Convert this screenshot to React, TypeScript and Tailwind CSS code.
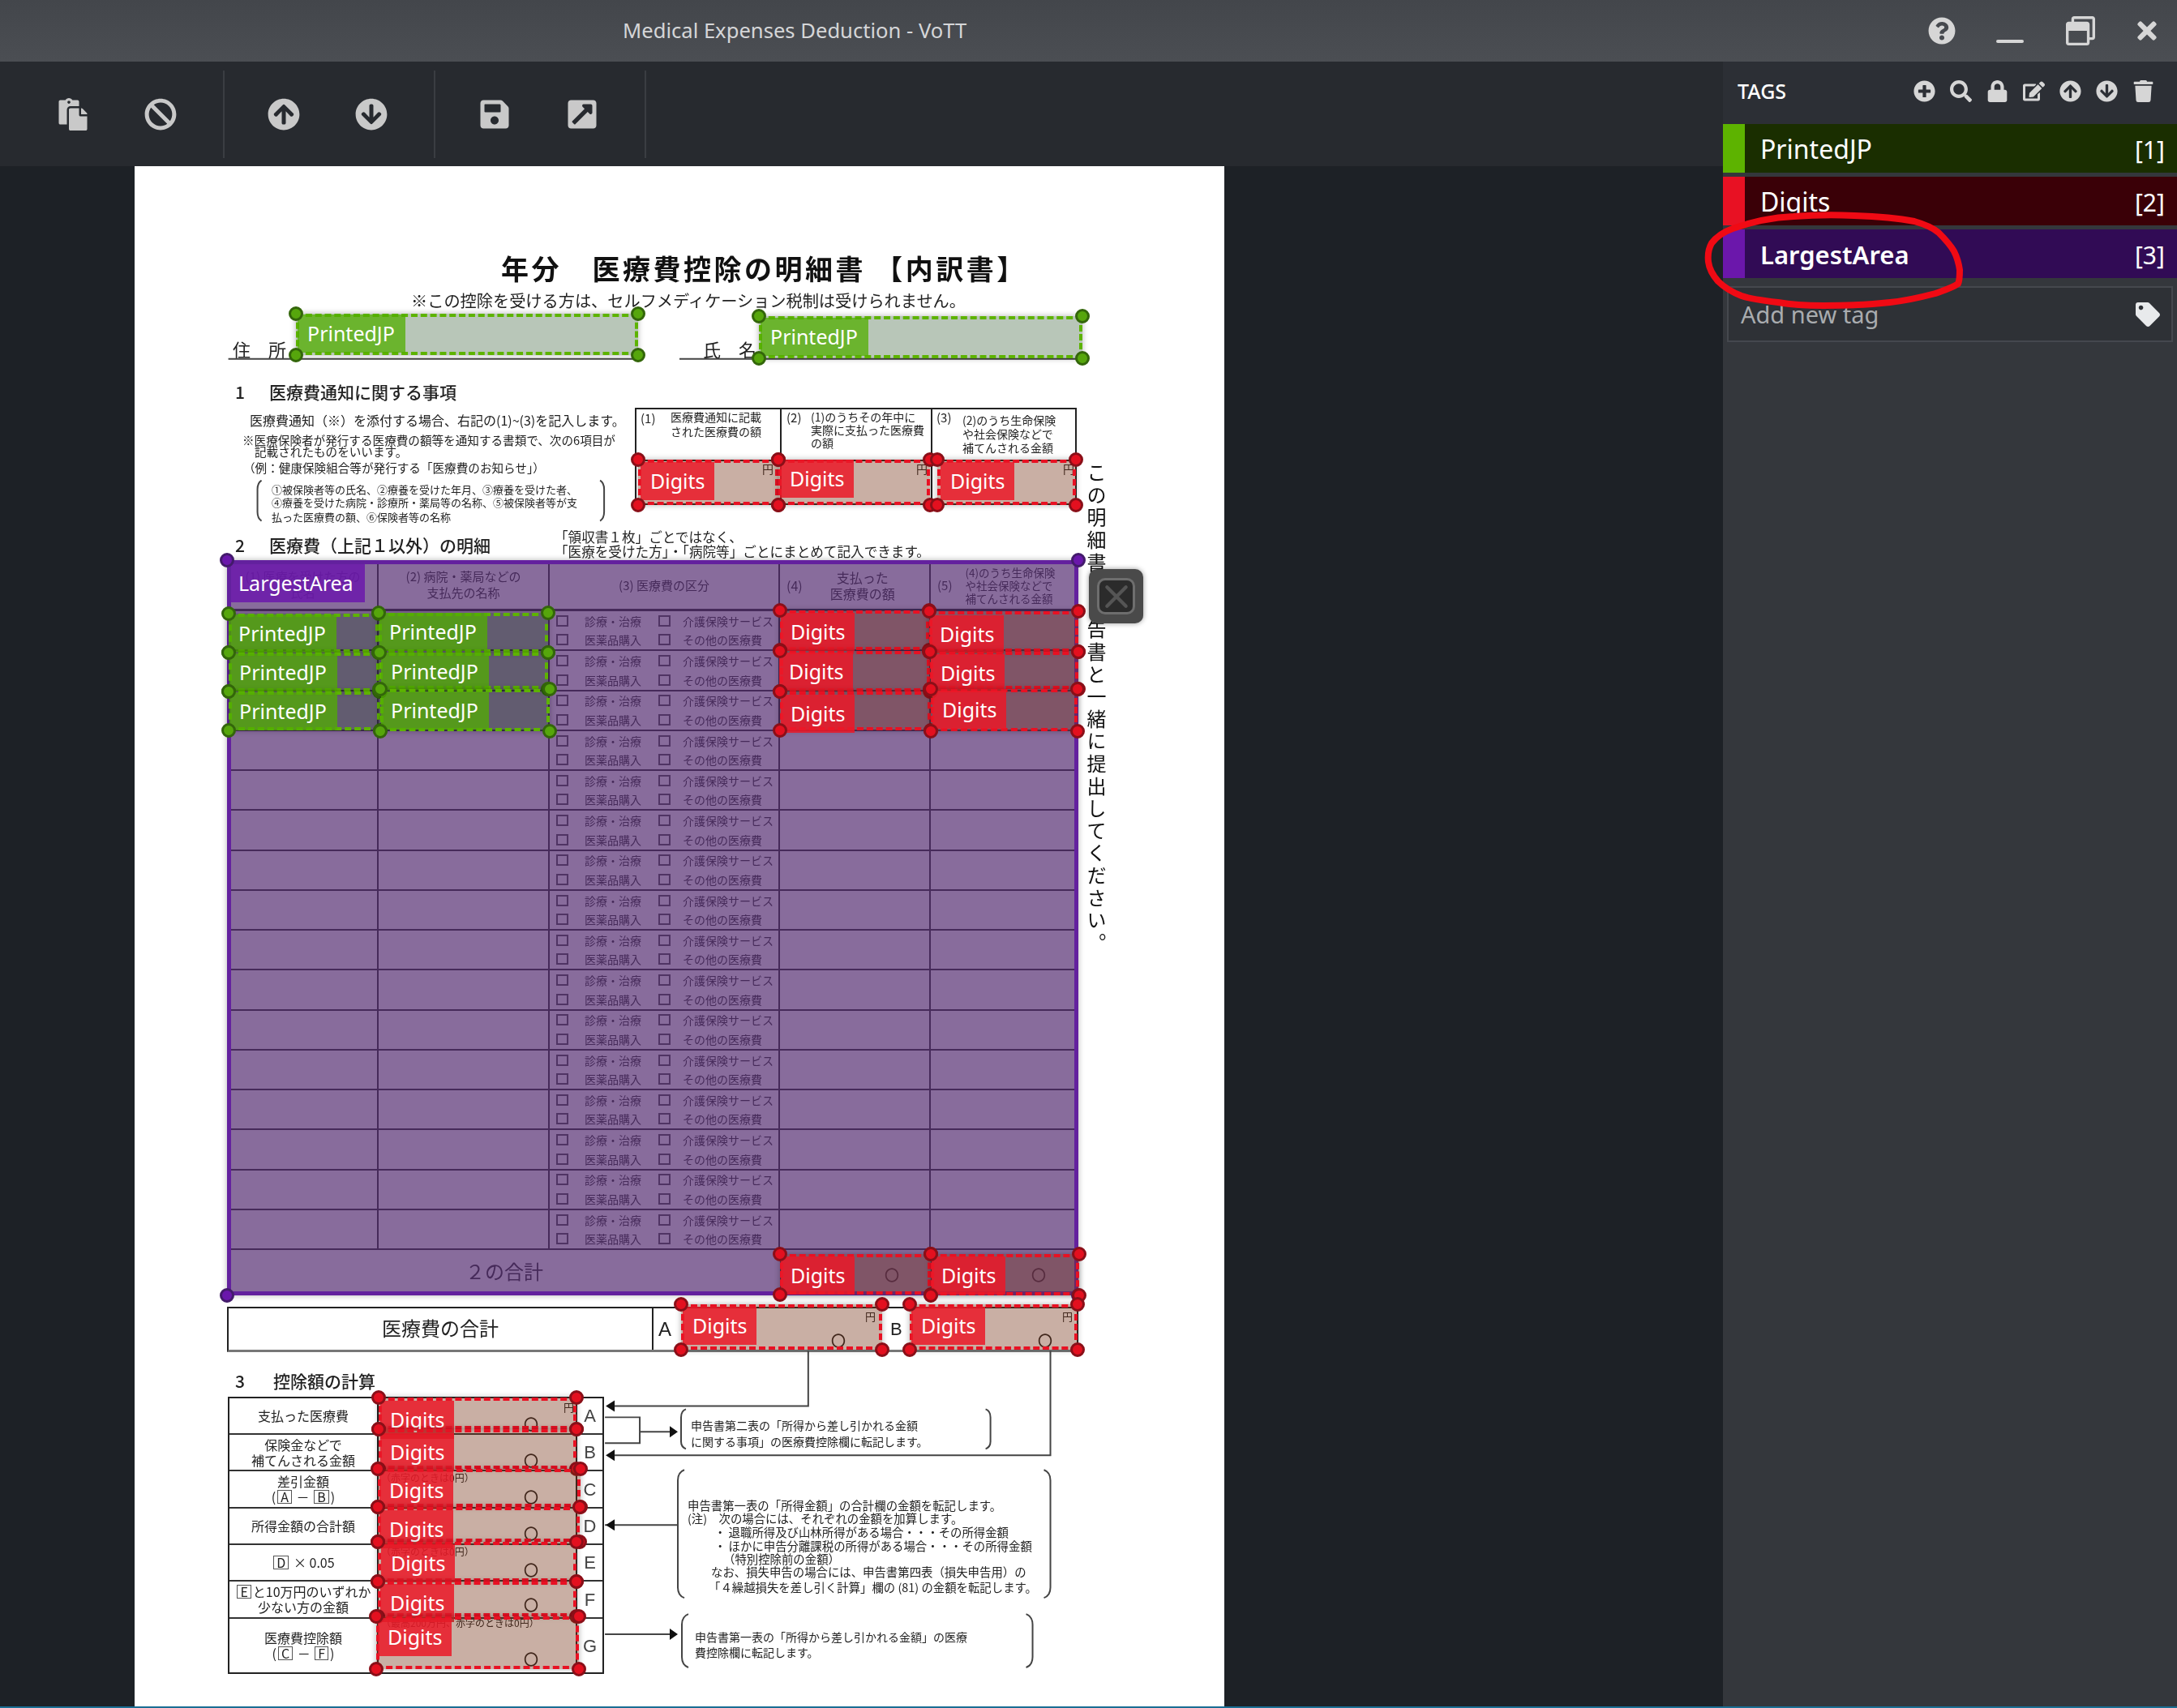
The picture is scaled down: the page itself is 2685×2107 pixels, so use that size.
import type { ReactNode } from "react";
import {
  FaArrowCircleDown,
  FaArrowCircleUp,
  FaBan,
  FaCut,
  FaEdit,
  FaExternalLinkSquareAlt,
  FaLock,
  FaPaste,
  FaPlusCircle,
  FaQuestionCircle,
  FaRegWindowRestore,
  FaSave,
  FaSearch,
  FaTag,
  FaTimes,
  FaTrash,
} from "react-icons/fa";

const ui = "font-['Noto_Sans',sans-serif]";
const jp = "font-['Noto_Sans_CJK_JP',sans-serif]";

// doc origin inside the screenshot
const OX = 166;
const OY = 205;

type Kind = "green" | "red";
type Region = { kind: Kind; x0: number; y0: number; x1: number; y1: number; lx?: number; ly?: number };

const regions: Region[] = [
  { kind: "green", x0: 365, y0: 387, x1: 787, y1: 438, lx: 367, ly: 388 },
  { kind: "green", x0: 936, y0: 390, x1: 1335, y1: 442, lx: 938, ly: 392 },
  { kind: "red", x0: 787, y0: 567, x1: 960, y1: 623, lx: 790, ly: 570 },
  { kind: "red", x0: 960, y0: 567, x1: 1147, y1: 623, lx: 962, ly: 567 },
  { kind: "red", x0: 1156, y0: 567, x1: 1327, y1: 623, lx: 1160, ly: 570 },
  { kind: "green", x0: 282, y0: 757, x1: 467, y1: 805, lx: 282, ly: 758 },
  { kind: "green", x0: 282, y0: 805, x1: 468, y1: 853, lx: 283, ly: 806 },
  { kind: "green", x0: 282, y0: 853, x1: 469, y1: 901, lx: 283, ly: 854 },
  { kind: "green", x0: 467, y0: 756, x1: 676, y1: 805, lx: 468, ly: 756 },
  { kind: "green", x0: 468, y0: 805, x1: 676, y1: 850, lx: 470, ly: 805 },
  { kind: "green", x0: 469, y0: 850, x1: 678, y1: 902, lx: 470, ly: 853 },
  { kind: "red", x0: 962, y0: 753, x1: 1146, y1: 802, lx: 963, ly: 756 },
  { kind: "red", x0: 962, y0: 803, x1: 1147, y1: 853, lx: 961, ly: 805 },
  { kind: "red", x0: 962, y0: 853, x1: 1148, y1: 901, lx: 963, ly: 857 },
  { kind: "red", x0: 1146, y0: 754, x1: 1330, y1: 804, lx: 1147, ly: 759 },
  { kind: "red", x0: 1147, y0: 804, x1: 1330, y1: 850, lx: 1148, ly: 807 },
  { kind: "red", x0: 1148, y0: 850, x1: 1329, y1: 902, lx: 1150, ly: 852 },
  { kind: "red", x0: 962, y0: 1547, x1: 1148, y1: 1597, lx: 963, ly: 1550 },
  { kind: "red", x0: 1148, y0: 1547, x1: 1331, y1: 1598, lx: 1149, ly: 1550 },
  { kind: "red", x0: 840, y0: 1609, x1: 1088, y1: 1665, lx: 842, ly: 1612 },
  { kind: "red", x0: 1122, y0: 1609, x1: 1329, y1: 1665, lx: 1124, ly: 1612 },
  { kind: "red", x0: 467, y0: 1724, x1: 711, y1: 1763, lx: 469, ly: 1728 },
  { kind: "red", x0: 467, y0: 1763, x1: 711, y1: 1812, lx: 469, ly: 1768 },
  { kind: "red", x0: 466, y0: 1812, x1: 716, y1: 1859, lx: 468, ly: 1815 },
  { kind: "red", x0: 466, y0: 1859, x1: 715, y1: 1902, lx: 468, ly: 1863 },
  { kind: "red", x0: 466, y0: 1902, x1: 711, y1: 1951, lx: 470, ly: 1905 },
  { kind: "red", x0: 466, y0: 1951, x1: 711, y1: 1994, lx: 469, ly: 1954 },
  { kind: "red", x0: 464, y0: 1994, x1: 714, y1: 2059, lx: 466, ly: 1996 },
];

// loose text of the scanned form: [x, centre y, size, text]
const lines: [number, number, number, string][] = [
  [507, 371, 20.2, "※この控除を受ける方は、セルフメディケーション税制は受けられません。"],
  [287, 430, 22, "住　所"],
  [867, 430, 22, "氏　名"],
  [290, 483, 21, "1"],
  [332, 483, 21, "医療費通知に関する事項"],
  [308, 518, 16, "医療費通知（※）を添付する場合、右記の(1)~(3)を記入します。"],
  [299, 543, 14.6, "※医療保険者が発行する医療費の額等を通知する書類で、次の6項目が"],
  [314, 557, 14.6, "記載されたものをいいます。"],
  [300, 577, 14.6, "（例：健康保険組合等が発行する「医療費のお知らせ」）"],
  [335, 603, 13, "①被保険者等の氏名、②療養を受けた年月、③療養を受けた者、"],
  [335, 619, 13, "④療養を受けた病院・診療所・薬局等の名称、⑤被保険者等が支"],
  [335, 637, 13, "払った医療費の額、⑥保険者等の名称"],
  [290, 672, 21, "2"],
  [332, 672, 21, "医療費（上記１以外）の明細"],
  [684, 662, 16.6, "「領収書１枚」ごとではなく、"],
  [684, 680, 16.6, "「医療を受けた方」・「病院等」ごとにまとめて記入できます。"],
  [790, 515, 15, "(1)"],
  [827, 514, 14, "医療費通知に記載"],
  [827, 532, 14, "された医療費の額"],
  [970, 514, 15, "(2)"],
  [1000, 514, 14, "(1)のうちその年中に"],
  [1000, 530, 14, "実際に支払った医療費"],
  [1000, 546, 14, "の額"],
  [1155, 514, 15, "(3)"],
  [1187, 518, 14, "(2)のうち生命保険"],
  [1187, 535, 14, "や社会保険などで"],
  [1187, 552, 14, "補てんされる金額"],
  [940, 578, 14, "円"],
  [1130, 578, 14, "円"],
  [1311, 578, 14, "円"],
  [290, 1703, 21, "3"],
  [337, 1703, 21, "控除額の計算"],
  [1067, 1623, 13, "円"],
  [1310, 1623, 13, "円"],
  [852, 1758, 14, "申告書第二表の「所得から差し引かれる金額"],
  [852, 1778, 14, "に関する事項」の医療費控除欄に転記します。"],
  [848, 1857, 14.4, "申告書第一表の「所得金額」の合計欄の金額を転記します。"],
  [848, 1873, 14.4, "(注)　次の場合には、それぞれの金額を加算します。"],
  [881, 1890, 14.4, "・ 退職所得及び山林所得がある場合・・・その所得金額"],
  [881, 1907, 14.4, "・ ほかに申告分離課税の所得がある場合・・・その所得金額"],
  [892, 1923, 14.4, "（特別控除前の金額）"],
  [877, 1939, 14.4, "なお、損失申告の場合には、申告書第四表（損失申告用）の"],
  [874, 1958, 14.4, "「４繰越損失を差し引く計算」欄の (81) の金額を転記します。"],
  [857, 2019, 14, "申告書第一表の「所得から差し引かれる金額」の医療"],
  [857, 2038, 14, "費控除欄に転記します。"],
  [695, 1735, 13, "円"],
  [470, 1823, 12, "（赤字のときは0円）"],
  [470, 1914, 12, "（赤字のときは0円）"],
  [470, 2002, 12, "（最高200万円、赤字のときは0円）"],
  [646, 1756, 18, "〇"],
  [646, 1801, 18, "〇"],
  [646, 1846, 18, "〇"],
  [646, 1891, 18, "〇"],
  [646, 1936, 18, "〇"],
  [646, 1979, 18, "〇"],
  [646, 2046, 18, "〇"],
  [1025, 1653, 18, "〇"],
  [1280, 1653, 18, "〇"],
  [1091, 1572, 18, "〇"],
  [1272, 1572, 18, "〇"],
];

function Boxed({ children }: { children: ReactNode }) {
  return <span className="mx-[2px] inline-block border border-[#555] px-[3px] leading-[15px]">{children}</span>;
}

const calcRows: { h: number; letter: string; rows: ReactNode[] }[] = [
  { h: 45, letter: "A", rows: ["支払った医療費"] },
  { h: 45, letter: "B", rows: ["保険金などで", "補てんされる金額"] },
  {
    h: 46,
    letter: "C",
    rows: [
      "差引金額",
      <>
        (<Boxed>A</Boxed> － <Boxed>B</Boxed>)
      </>,
    ],
  },
  { h: 45, letter: "D", rows: ["所得金額の合計額"] },
  {
    h: 45,
    letter: "E",
    rows: [
      <>
        <Boxed>D</Boxed> × 0.05
      </>,
    ],
  },
  {
    h: 46,
    letter: "F",
    rows: [
      <>
        <Boxed>E</Boxed>と10万円のいずれか
      </>,
      "少ない方の金額",
    ],
  },
  {
    h: 66,
    letter: "G",
    rows: [
      "医療費控除額",
      <>
        (<Boxed>C</Boxed> － <Boxed>F</Boxed>)
      </>,
    ],
  },
];

function Region({ r }: { r: Region }) {
  const green = r.kind === "green";
  return (
    <>
      <div
        className={`absolute border-4 border-dashed shadow-[0_0_7px_rgba(0,0,0,0.3)] ${
          green ? "border-[#5db300] bg-[rgba(0,50,0,0.28)]" : "border-[#e81123] bg-[rgba(115,50,20,0.39)]"
        }`}
        style={{ left: r.x0 - OX, top: r.y0 - OY, width: r.x1 - r.x0, height: r.y1 - r.y0 }}
      />
      <div
        className={`absolute flex h-[47px] items-center pl-3 text-[25px] text-white ${ui} ${
          green ? "w-[133px] bg-[rgba(82,174,0,0.75)]" : "w-[91px] bg-[rgba(235,25,40,0.85)]"
        }`}
        style={{ left: (r.lx ?? r.x0) - OX, top: (r.ly ?? r.y0) - OY }}
      >
        {green ? "PrintedJP" : "Digits"}
      </div>
      {[
        [r.x0, r.y0],
        [r.x1, r.y0],
        [r.x0, r.y1],
        [r.x1, r.y1],
      ].map(([x, y]) => (
        <div
          key={`${x}-${y}`}
          className={`absolute h-[18px] w-[18px] rounded-full border-[3px] ${
            green ? "border-[#33660a] bg-[#56a60c]" : "border-[#8a0f18] bg-[#e3101f]"
          }`}
          style={{ left: x - OX - 9, top: y - OY - 9 }}
        />
      ))}
    </>
  );
}

function Form() {
  return (
    <div className={`absolute inset-0 text-[#222] blur-[0.5px] ${jp}`}>
      <div className="absolute left-[452px] top-[109px] whitespace-pre text-[34px] font-bold leading-[34px] tracking-[3.5px] text-[#111]">
        年分　医療費控除の明細書 【内訳書】
      </div>

      {lines.map(([x, y, size, text]) => (
        <div
          key={`${x}-${y}`}
          className="absolute whitespace-pre leading-none"
          style={{ left: x - OX, top: y - OY - size / 2, fontSize: size, fontWeight: size === 21 || size === 18 ? 500 : 400 }}
        >
          {text}
        </div>
      ))}

      <div className="absolute left-[617px] top-[298px] h-[120px] w-[545px] border-2 border-[#222]">
        <div className="absolute left-[177px] top-0 h-full w-0.5 bg-[#222]" />
        <div className="absolute left-[363px] top-0 h-full w-0.5 bg-[#222]" />
        <div className="absolute left-0 top-[62px] h-0.5 w-full bg-[#222]" />
      </div>

      {/* section 2 table */}
      <div className="absolute left-[114px] top-[486px] w-[1050px] border-2 border-[#222]">
        <div className="grid h-[61px] grid-cols-[185px_211px_284px_186px_180px] border-b-[3px] border-[#222] text-[15px] leading-[20px]">
          <div className="border-r-2 border-[#222] pt-2 text-center">
            (1) 医療を受けた方の
            <br />
            氏名
          </div>
          <div className="border-r-2 border-[#222] pt-2 text-center">
            (2) 病院・薬局などの
            <br />
            支払先の名称
          </div>
          <div className="flex items-center justify-center border-r-2 border-[#222]">(3) 医療費の区分</div>
          <div className="flex items-center gap-[34px] border-r-2 border-[#222] pl-2 text-[16px]">
            <span>(4)</span>
            <span className="text-center">
              支払った
              <br />
              医療費の額
            </span>
          </div>
          <div className="flex items-center gap-4 pl-2 text-[13.5px] leading-[16px]">
            <span className="text-[15px]">(5)</span>
            <span>
              (4)のうち生命保険
              <br />
              や社会保険などで
              <br />
              補てんされる金額
            </span>
          </div>
        </div>
        {Array.from({ length: 16 }, (_, i) => (
          <div
            key={i}
            className="grid h-[49.25px] grid-cols-[185px_211px_284px_186px_180px] border-b-2 border-[#222] last:border-b-4"
          >
            <div className="border-r-2 border-[#222]" />
            <div className="border-r-2 border-[#222]" />
            <div className="flex flex-col justify-around border-r-2 border-[#222] pl-2 text-[14px] leading-none">
              <div className="flex items-center">
                <span className="h-[14px] w-[15px] border-2 border-[#444]" />
                <span className="ml-5 w-[70px] whitespace-nowrap">診療・治療</span>
                <span className="ml-[21px] h-[14px] w-[15px] border-2 border-[#444]" />
                <span className="ml-[15px] whitespace-nowrap">介護保険サービス</span>
              </div>
              <div className="flex items-center">
                <span className="h-[14px] w-[15px] border-2 border-[#444]" />
                <span className="ml-5 w-[70px] whitespace-nowrap">医薬品購入</span>
                <span className="ml-[21px] h-[14px] w-[15px] border-2 border-[#444]" />
                <span className="ml-[15px] whitespace-nowrap">その他の医療費</span>
              </div>
            </div>
            <div className="border-r-2 border-[#222]" />
            <div />
          </div>
        ))}
        <div className="grid h-[52px] grid-cols-[682px_186px_180px]">
          <div className="flex items-center justify-center border-r-2 border-[#222] text-[24px]">２の合計</div>
          <div className="border-r-2 border-[#222]" />
          <div />
        </div>
      </div>

      {/* 医療費の合計 row */}
      <div className="absolute left-[114px] top-[1407px] flex h-[56px] w-[1050px] items-center border-2 border-b-[3px] border-[#222] border-b-[#777] text-[24px]">
        <div className="w-[522px] pb-1 text-center">医療費の合計</div>
        <div className="h-full w-0.5 bg-[#222]" />
        <div className="ml-1.5 font-['Liberation_Sans',sans-serif] text-[24px]">A</div>
        <div className="ml-[270px] font-['Liberation_Sans',sans-serif] text-[22px]">B</div>
      </div>

      {/* section 3 table */}
      <div className="absolute left-[115px] top-[1518px] w-[464px] border-2 border-[#222]">
        {calcRows.map((row) => (
          <div
            key={row.letter}
            className="grid grid-cols-[184px_245px_31px] border-b-2 border-[#333] text-center last:border-b-0"
            style={{ height: row.h }}
          >
            <div className="flex flex-col justify-center border-r-2 border-[#222] text-[16px] leading-[19px]">
              {row.rows.map((t, i) => (
                <div key={i} className="whitespace-nowrap">
                  {t}
                </div>
              ))}
            </div>
            <div className="border-r-2 border-[#222]" />
            <div className="flex items-center justify-center font-['Liberation_Sans',sans-serif] text-[22px] text-[#444]">
              {row.letter}
            </div>
          </div>
        ))}
      </div>

      {/* vertical note down the right edge */}
      <div className="absolute left-[1171px] top-[366px] h-[610px] whitespace-nowrap text-[24px] leading-[30px] tracking-[3.6px] text-[#111] [writing-mode:vertical-rl]">
        この明細書は申告書と一緒に提出してください。
      </div>

      {/* leader lines and brackets of section 3 */}
      <svg className="absolute inset-0 h-full w-full" viewBox={`${OX} ${OY} 1344 1902`} fill="none" stroke="#444" strokeWidth="2">
        <path d="M281 443H784M838 443H1335M997 1668V1736H758M1296 1668V1797H758" />
        <path d="M746 1750H789V1782H746M789 1768H826M746 1883H836M746 2018H826" />
        <path d="M758 1729V1743L747 1736ZM758 1790V1804L747 1797ZM758 1876V1890L747 1883ZM826 1761V1775L836 1768ZM826 2011V2025L836 2018Z" fill="#111" stroke="none" />
        <path d="M846 1740Q840 1742 840 1750V1780Q840 1787 846 1789M1216 1740Q1222 1742 1222 1750V1780Q1222 1787 1216 1789" />
        <path d="M844 1815Q836 1818 836 1828V1960Q836 1970 844 1973M1288 1815Q1296 1818 1296 1828V1960Q1296 1970 1288 1973" />
        <path d="M849 1993Q841 1996 841 2006V2046Q841 2056 849 2059M1266 1993Q1274 1996 1274 2006V2046Q1274 2056 1266 2059" />
        <path d="M322 593Q317 596 317 604V632Q317 640 322 643M740 593Q745 596 745 604V632Q745 640 740 643" />
      </svg>
    </div>
  );
}

function Document() {
  return (
    <div className="relative h-full w-[1344px] bg-white">
      <Form />

      {/* LargestArea region */}
      <div className="absolute left-[114px] top-[486px] h-[907px] w-[1050px] border-[5px] border-[#63219e] bg-[rgba(86,46,114,0.7)] shadow-[0_0_7px_rgba(0,0,0,0.3)]" />
      <div className={`absolute left-[119px] top-[491px] flex h-[47px] w-[165px] items-center pl-[9px] text-[25px] text-white ${ui} bg-[rgba(107,23,171,0.85)]`}>
        LargestArea
      </div>
      {[
        [280, 691],
        [1330, 691],
        [280, 1598],
        [1330, 1598],
      ].map(([x, y]) => (
        <div
          key={`${x}-${y}`}
          className="absolute h-[18px] w-[18px] rounded-full border-[3px] border-[#431a6b] bg-[#6a17ab]"
          style={{ left: x - OX - 9, top: y - OY - 9 }}
        />
      ))}

      {regions.map((r) => (
        <Region key={`${r.x0}-${r.y0}`} r={r} />
      ))}

      {/* delete-region button */}
      <div className="absolute left-[1177px] top-[497px] flex h-[67px] w-[67px] items-center justify-center rounded-[10px] bg-[#4a4a4a] shadow-[0_0_6px_rgba(0,0,0,0.4)]">
        <div className="flex h-[45px] w-[47px] items-center justify-center rounded-[10px] border-[3px] border-[#6e6e6e] bg-[#2b2b2b]">
          <svg viewBox="0 0 32 32" className="h-[34px] w-[34px]" stroke="#555" strokeWidth="4" strokeLinecap="round">
            <path d="M5 5L27 27M27 5L5 27" />
          </svg>
        </div>
      </div>
    </div>
  );
}

const toolGroups = [
  [FaPaste, FaBan],
  [FaArrowCircleUp, FaArrowCircleDown],
  [FaSave, FaExternalLinkSquareAlt],
];

function Toolbar() {
  return (
    <div className="flex h-[129px] items-center bg-[#272a2f] text-[#c9c9c9]">
      <FaCut className="-ml-[38px] mr-[15px] h-[40px] w-[40px] shrink-0" />
      {toolGroups.map((group, i) => (
        <div key={i} className="flex h-[108px] items-center gap-[68px] border-r-2 border-[#3a3d42] pl-[53px] pr-[57px]">
          {group.map((Icon, j) => (
            <Icon key={j} className="h-[40px] w-[40px]" />
          ))}
        </div>
      ))}
    </div>
  );
}

const tags = [
  { name: "PrintedJP", key: "[1]", bar: "bg-[#5db300]", bg: "bg-[#1a2e00]", text: "text-[32px]" },
  { name: "Digits", key: "[2]", bar: "bg-[#e81123]", bg: "bg-[#3a0007]", text: "text-[32px]" },
  { name: "LargestArea", key: "[3]", bar: "bg-[#6b17ab]", bg: "bg-[#310b55]", text: "text-[31px] font-semibold" },
];

function TagsPanel() {
  return (
    <div className={`relative flex w-[560px] flex-col bg-[#34373c] ${ui}`}>
      <div className="flex h-[77px] items-center justify-between bg-[#2c2f35] pb-1 pl-[18px] pr-[28px] text-[#d6d6d6]">
        <span className="text-[25px] font-medium text-white">TAGS</span>
        <div className="flex items-center gap-[18px]">
          <FaPlusCircle className="h-[27px] w-[27px]" />
          <FaSearch className="h-[27px] w-[27px]" />
          <FaLock className="h-[27px] w-[27px]" />
          <FaEdit className="h-[27px] w-[27px]" />
          <FaArrowCircleUp className="h-[27px] w-[27px]" />
          <FaArrowCircleDown className="h-[27px] w-[27px]" />
          <FaTrash className="h-[27px] w-[27px]" />
        </div>
      </div>
      <div className="flex flex-col gap-[5px]">
        {tags.map((t) => (
          <div key={t.name} className={`flex h-[60px] items-center ${t.bg}`}>
            <div className={`h-full w-[27px] ${t.bar}`} />
            <span className={`ml-[19px] flex-1 pt-0.5 text-white ${t.text}`}>{t.name}</span>
            <span className="w-[52px] pt-0.5 text-[30px] text-white">{t.key}</span>
          </div>
        ))}
      </div>
      <div className="mx-[5px] mt-[10px] flex h-[69px] items-center justify-between border-2 border-[#45484e] bg-[#2e3136] pl-[15px] pr-[14px]">
        <span className="text-[29px] text-[#a9acaf]">Add new tag</span>
        <FaTag className="h-[30px] w-[30px] text-[#e8eaec]" />
      </div>
    </div>
  );
}

export default function App() {
  return (
    <div className="relative flex h-[2107px] w-[2685px] flex-col overflow-hidden bg-[#1d2126]">
      <div className={`relative flex h-[76px] shrink-0 items-center bg-gradient-to-b from-[#43464b] to-[#4b4e53] pl-[768px] ${ui}`}>
        <span className="text-[25.6px] text-[#d5d6d8]">Medical Expenses Deduction - VoTT</span>
        <div className="absolute inset-y-0 right-0 flex items-center text-[#d6d6d6]">
          <FaQuestionCircle className="mr-[50px] h-[34px] w-[34px]" />
          <div className="mr-[52px] mt-[26px] h-1 w-[34px] rounded-full bg-[#d6d6d6]" />
          <FaRegWindowRestore className="mr-[47px] h-[36px] w-[36px]" />
          <FaTimes className="mr-[20px] h-[34px] w-[34px]" />
        </div>
      </div>

      <div className="flex min-h-0 flex-1">
        <div className="flex min-w-0 flex-1 flex-col">
          <Toolbar />
          <div className="min-h-0 flex-1 pl-[166px]">
            <Document />
          </div>
        </div>
        <TagsPanel />
      </div>
      <div className="h-0.5 shrink-0 bg-[#1a6e94]" />

      {/* hand-drawn circle round the selected tag */}
      <svg className="pointer-events-none absolute inset-0" width="2685" height="2107" fill="none" stroke="#f00a14" strokeWidth="8" strokeLinecap="round">
        <path d="M2137 282C2165 272 2190 268 2212 267C2240 265 2265 265 2287 266C2315 267 2340 269 2361 273C2375 277 2384 281 2391 287C2400 296 2406 303 2410 310C2414 318 2416 326 2417 333C2417 340 2417 346 2415 350C2408 355 2398 358 2387 362C2368 367 2350 371 2331 373C2305 376 2275 377 2249 377C2228 377 2210 376 2193 373C2175 371 2160 369 2148 365C2135 360 2126 354 2119 347C2112 339 2108 331 2107 323C2106 314 2107 307 2111 300C2117 292 2126 286 2137 282Z" />
      </svg>
    </div>
  );
}
